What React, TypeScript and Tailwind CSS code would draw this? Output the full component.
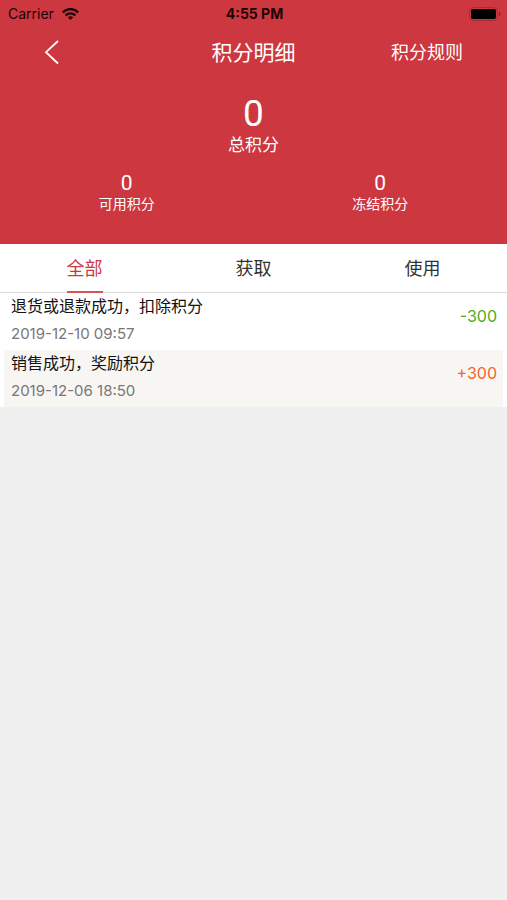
import { useState } from "react";

const tabs = ["全部", "获取", "使用"];

const records = [
  { title: "退货或退款成功，扣除积分", time: "2019-12-10 09:57", amount: -300 },
  { title: "销售成功，奖励积分", time: "2019-12-06 18:50", amount: 300 },
];

function StatusBar() {
  return (
    <div className="grid h-7 grid-cols-3 items-center pr-1.5 pl-2 text-[14px] leading-5 text-[#1c0406]">
      <div className="flex items-center gap-2">
        <span>Carrier</span>
        <svg width="17" height="12" viewBox="0 0 17 12" fill="none" stroke="currentColor" strokeWidth="2.4" aria-hidden="true">
          <path d="M0.8 4.4C5 0 12 0 16.2 4.4" />
          <path d="M3.6 7.4C6.3 4.7 10.7 4.7 13.4 7.4" />
          <path d="M8.5 12L5.9 9.4C7.3 8 9.7 8 11.1 9.4Z" fill="currentColor" stroke="none" />
        </svg>
      </div>
      <span className="text-center font-bold">4:55 PM</span>
      <svg className="justify-self-end" width="32" height="14" viewBox="0 0 32 14" aria-hidden="true">
        <rect x="0.5" y="0.5" width="28" height="13" rx="4" fill="none" stroke="#a62c34" />
        <rect x="2" y="2" width="25" height="10" rx="2" fill="#000" />
        <path d="M30 5C32 5.5 32 8.5 30 9Z" fill="#8d252d" />
      </svg>
    </div>
  );
}

function Balance({ label }: { label: string }) {
  return (
    <div className="flex flex-col items-center">
      <span className="font-[Roboto,sans-serif] text-[21px] leading-[22px]">0</span>
      <span className="text-[14px] leading-5">{label}</span>
    </div>
  );
}

export default function App() {
  const [active, setActive] = useState(0);

  return (
    <div className="min-h-screen bg-[#f0f0f0] font-[Inter,'Noto_Sans_CJK_SC',sans-serif]">
      <header className="bg-[#cd373f] pb-[30px] text-white">
        <StatusBar />
        <div className="grid h-[50px] grid-cols-3 items-center px-11">
          <button type="button" aria-label="返回" className="justify-self-start">
            <svg width="15" height="26" viewBox="0 0 15 26" fill="none" stroke="currentColor" strokeWidth="1.8" aria-hidden="true">
              <path d="M14 1L2 12.2L14 23.5" />
            </svg>
          </button>
          <h1 className="text-center text-[21px] leading-7">积分明细</h1>
          <button type="button" className="justify-self-end text-[18px] leading-7">积分规则</button>
        </div>
        <div className="flex flex-col items-center pt-[17px]">
          <span className="font-[Roboto,sans-serif] text-[37px] leading-[38px]">0</span>
          <span className="text-[17px] leading-6">总积分</span>
        </div>
        <div className="grid grid-cols-2 pt-[15px]">
          <Balance label="可用积分" />
          <Balance label="冻结积分" />
        </div>
      </header>

      <nav className="grid grid-cols-3 border-b border-[#dcdcdc] bg-white">
        {tabs.map((tab, i) => (
          <button
            key={tab}
            type="button"
            aria-pressed={i === active}
            onClick={() => setActive(i)}
            className={
              "-mb-px justify-self-center border-b-2 pt-0.5 text-[18px] leading-[45px] " +
              (i === active ? "border-[#d8545b] text-[#cd373f]" : "border-transparent text-[#333]")
            }
          >
            {tab}
          </button>
        ))}
      </nav>

      <ul className="bg-white px-1">
        {records.map((r) => (
          <li key={r.time} className="flex items-start justify-between pr-1.5 pb-[3px] pl-[7px] even:bg-[#f8f6f2]">
            <div>
              <p className="text-[16px] leading-[27px] text-[#111]">{r.title}</p>
              <p className="text-[15px] leading-[27px] text-[#777]">{r.time}</p>
            </div>
            <span className={"pt-[11px] text-[16px] leading-6 " + (r.amount < 0 ? "text-[#4cae20]" : "text-[#f0672e]")}>
              {r.amount > 0 ? "+" + r.amount : r.amount}
            </span>
          </li>
        ))}
      </ul>
    </div>
  );
}
